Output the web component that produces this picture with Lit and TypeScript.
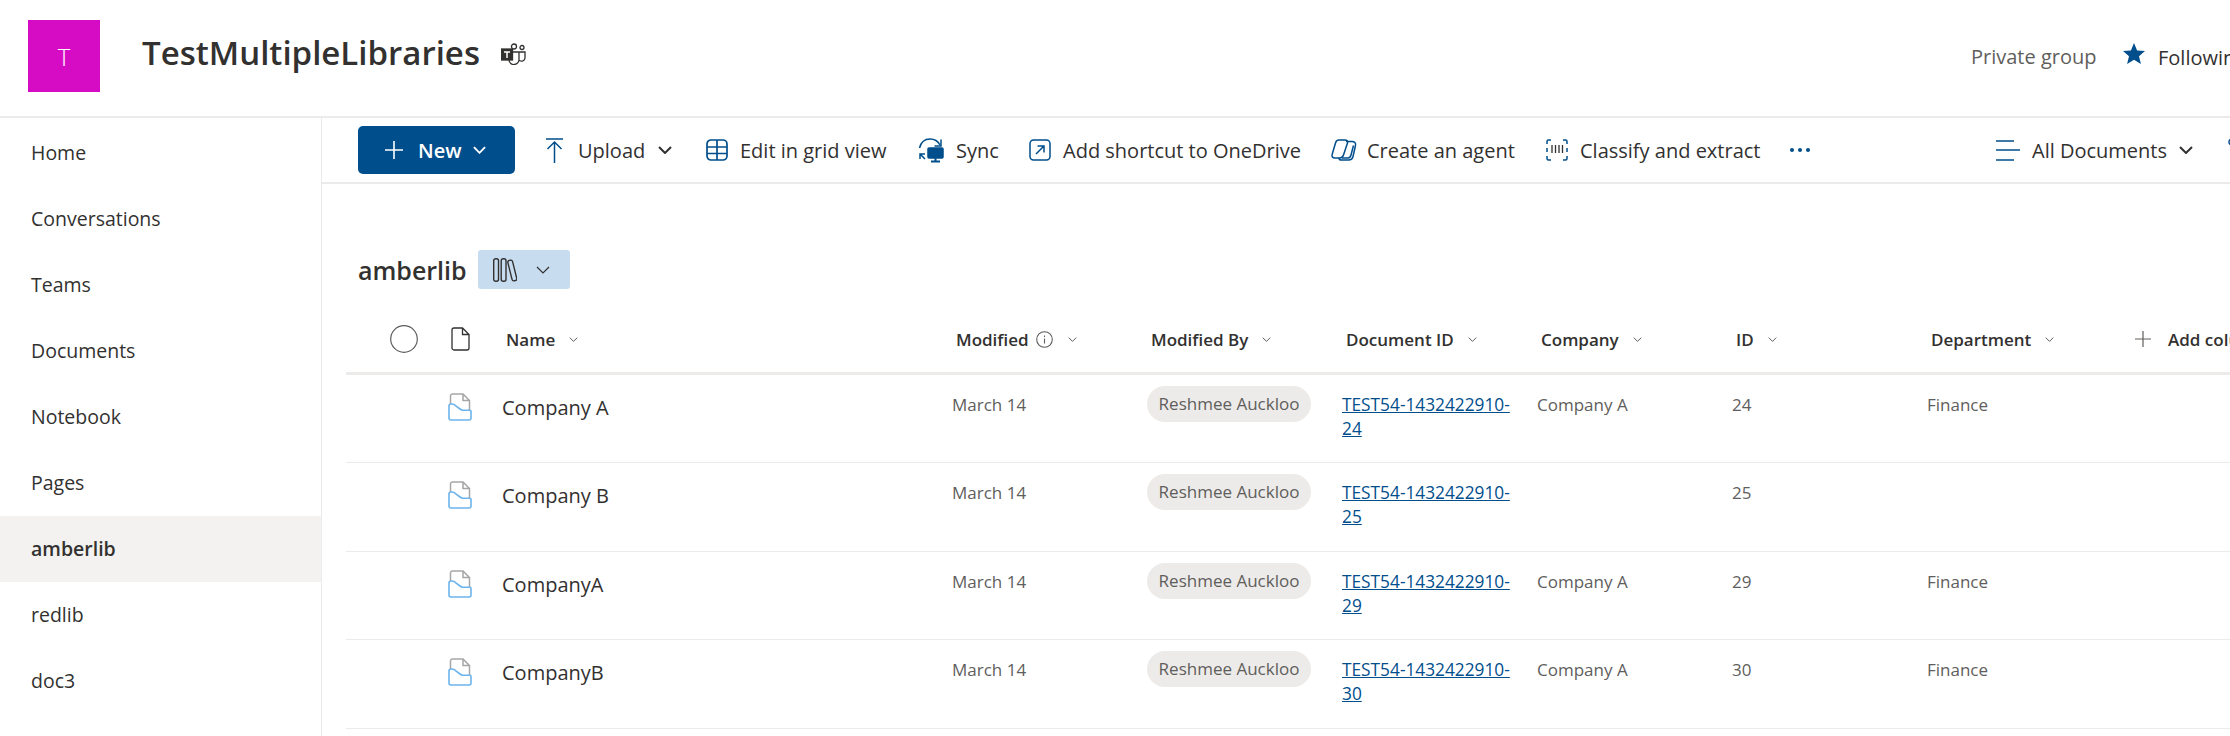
import { LitElement, html, css } from "lit";
import { customElement } from "lit/decorators.js";

const BLUE = "#004e8c";
const chev = (w: number, h: number, sw: number, color = "#323130") => html`<svg class="chev" width=${w} height=${h} viewBox="0 0 14 8" fill="none" stroke=${color} stroke-width=${sw}><path d="M1 1l6 6 6-6" /></svg>`;
const smallChev = () => chev(9, 5, 1.4, "#484644");

const icons = {
  plus: html`<svg width="18" height="18" viewBox="0 0 18 18" stroke="#fff" stroke-width="1.6"><path d="M9 0v18M0 9h18"/></svg>`,
  upload: html`<svg width="20" height="25" viewBox="0 0 20 25" fill="none" stroke=${BLUE} stroke-width="1.5"><path d="M1 1h17M9.500 25V4M2.500 11l7-7 7 7"/></svg>`,
  grid: html`<svg width="22" height="22" viewBox="0 0 22 22" fill="none" stroke=${BLUE} stroke-width="1.7"><rect x="1" y="1" width="20" height="20" rx="4"/><path d="M1 8h20M1 14.500h20M11 1v20"/></svg>`,
  sync: html`<svg width="26" height="26" viewBox="0 0 26 26" fill="none" stroke=${BLUE} stroke-width="1.5"><path d="M1.500 11C3 5 7 2 12 2c4 0 8 2 10 6"/><path d="M23 2.500V9h-6.500"/><path d="M2 17l5 5M2 22v-5h5"/><rect x="10" y="11" width="15" height="10" rx="1" fill=${BLUE}/><path d="M17.500 21v3M13 24.500h9" stroke-width="2"/></svg>`,
  shortcut: html`<svg width="22" height="22" viewBox="0 0 22 22" fill="none" stroke=${BLUE} stroke-width="1.5"><rect x="1" y="1" width="20" height="20" rx="3.500"/><path d="M7 15l8-8M8.500 7H15v6.500"/></svg>`,
  copilot: html`<svg width="26" height="24" viewBox="0 0 26 24" fill="none" stroke=${BLUE} stroke-width="1.5"><path d="M8 2h6c2 0 3 1 2.500 3L12.500 17c-.6 2-2 3-4 3H4c-2.500 0-3.500-1.500-2.800-3.700L4.500 5C5 3 6 2 8 2z"/><path d="M15 3.500h6c2.500 0 4 1.500 3.500 4L22 18.500C21.500 21 20 22 17.500 22h-7c-2 0-2.800-1-2.300-2"/><path d="M11 20h6c1.500 0 2.500-1 3-3l2.500-9.500"/></svg>`,
  classify: html`<svg width="22" height="22" viewBox="0 0 22 22" fill="none" stroke=${BLUE} stroke-width="1.500"><path d="M5 1H2.500Q1 1 1 2.500V5M17 1h2.500Q21 1 21 2.500V5M5 21H2.500Q1 21 1 19.500V17M17 21h2.500q1.500 0 1.500-1.500V17M1 9v4M21 9v4"/><path d="M6 6v8M9.500 6v8M13 6v8M16.500 6v8" stroke="#323130" stroke-width="1.300"/></svg>`,
  dots: html`<svg width="20" height="4" viewBox="0 0 20 4" fill=${BLUE}><circle cx="2" cy="2" r="2"/><circle cx="10" cy="2" r="2"/><circle cx="18" cy="2" r="2"/></svg>`,
  view: html`<svg width="24" height="21" viewBox="0 0 24 21" fill="none" stroke=${BLUE} stroke-width="1.700"><path d="M0 1h18M0 10h24M0 20h18"/></svg>`,
  star: html`<svg class="star" width="22" height="22" viewBox="0 0 22 22" fill=${BLUE}><path d="M11 0l3.100 7.400 7.900.6-6 5.200 1.900 7.800L11 16.800 4.100 21l1.900-7.800L0 8l7.900-.6z"/></svg>`,
  teams: html`<svg width="25" height="22" viewBox="0 0 25 22" fill="none" stroke="#323130" stroke-width="1.300"><circle cx="13" cy="3.500" r="2.500"/><circle cx="21" cy="4.500" r="2"/><path d="M8 9h10v7a5 5 0 0 1-10 1M18.500 9H24v5.500a3.500 3.500 0 0 1-5.500 3"/><rect x=".5" y="6" width="11" height="11" fill="#323130"/><path d="M3 9h6M6 9v6" stroke="#fff" stroke-width="1.500"/></svg>`,
  books: html`<svg width="24" height="24" viewBox="0 0 24 24" fill="none" stroke="#323130" stroke-width="1.400"><rect x=".7" y=".7" width="4.800" height="22.600" rx="2"/><rect x="8.200" y=".7" width="4.800" height="22.600" rx="2"/><rect x="-2.400" y="-10.500" width="4.800" height="21" rx="2" transform="translate(19.300 12.500) rotate(-14)"/></svg>`,
  circle: html`<svg width="28" height="28" viewBox="0 0 28 28" fill="none" stroke="#605e5c" stroke-width="1.200"><circle cx="14" cy="14" r="13.300"/></svg>`,
  doc: html`<svg width="19" height="24" viewBox="0 0 19 24" fill="none" stroke="#323130" stroke-width="1.300"><path d="M3 1h8.500L18 7.500V21a2 2 0 0 1-2 2H3a2 2 0 0 1-2-2V3a2 2 0 0 1 2-2zM11.500 1v6.500H18"/></svg>`,
  folderDoc: html`<svg width="24" height="28" viewBox="0 0 24 28" fill="none"><path d="M2.500 12V3a2 2 0 0 1 2-2H15l6.500 6.500V17M15 1v6.500h6.500" stroke="#a6a6a6" stroke-width="1.500"/><path d="M1 13a2 2 0 0 1 2-2h1c2 0 3 1 4.500 2.300L12 16c1 .8 2 1.200 3 1.200h7a1 1 0 0 1 1 1V25a2 2 0 0 1-2 2H3a2 2 0 0 1-2-2z" fill="#fff" stroke="#6cb4ee" stroke-width="1.600"/></svg>`,
  info: html`<svg class="info" width="17" height="17" viewBox="0 0 17 17" fill="none" stroke="#605e5c" stroke-width="1.100"><circle cx="8.500" cy="8.500" r="7.800"/><path d="M8.500 7.500v5M8.500 4.500v1.400"/></svg>`,
  addPlus: html`<svg width="16" height="16" viewBox="0 0 16 16" stroke="#605e5c" stroke-width="1.200"><path d="M8 0v16M0 8h16"/></svg>`,
  filter: html`<svg width="20" height="24" viewBox="0 0 20 24" fill="none" stroke=${BLUE} stroke-width="1.500"><circle cx="5" cy="4" r="3"/><path d="M8 4h12"/></svg>`,
};

const NAV = ["Home", "Conversations", "Teams", "Documents", "Notebook", "Pages", "amberlib", "redlib", "doc3"];
const COLS = ["Modified By", "Document ID", "Company", "ID", "Department"];
const ROWS = [
  { name: "Company A", co: "Company A", id: "24", dept: "Finance" },
  { name: "Company B", co: "", id: "25", dept: "" },
  { name: "CompanyA", co: "Company A", id: "29", dept: "Finance" },
  { name: "CompanyB", co: "Company A", id: "30", dept: "Finance" },
];

@customElement("app-root")
export class AppRoot extends LitElement {
  static styles = css`
    :host {
      display: block;
      width: 2230px;
      height: 736px;
      overflow: hidden;
      background: #fff;
      font-family: "Open Sans", "Noto Sans", sans-serif;
      color: #323130;
      font-size: 20px;
    }
    svg { display: block; flex: none; }
    .top {
      height: 118px;
      box-sizing: border-box;
      border-bottom: 2px solid #edebe9;
      display: flex;
      width: 2400px;
      padding: 20px 0 0 28px;
    }
    .logo {
      width: 72px;
      height: 72px;
      background: #d60cc4;
      color: #fff;
      font-size: 24px;
      font-weight: 300;
      display: flex;
      align-items: center;
      justify-content: center;
      flex: none;
    }
    .title {
      margin: 8px 0 0 42px;
      font-size: 33px;
      font-weight: 600;
      line-height: 50px;
      width: 359px;
      white-space: nowrap;
    }
    .teams { margin-top: 23px; }
    .private {
      margin: 24px 0 0 1445px;
      color: #605e5c;
      width: 152px;
      line-height: 26px;
      white-space: nowrap;
    }
    .follow { display: flex; align-items: center; gap: 13px; margin-top: 24px; height: 26px; white-space: nowrap; }
    .star { margin-bottom: 6px; }
    .body { display: flex; }
    .nav {
      width: 322px;
      box-sizing: border-box;
      flex: none;
      border-right: 1px solid #edebe9;
      height: 618px;
      padding-top: 2px;
      font-size: 19.5px;
    }
    .nav-item {
      height: 66px;
      line-height: 66px;
      padding-left: 31px;
    }
    .nav-item.sel { background: #f3f2f1; font-weight: 600; }
    .main { flex: 1; min-width: 0; }
    .bar {
      height: 66px;
      box-sizing: border-box;
      border-bottom: 2px solid #edebe9;
      display: flex;
      align-items: center;
      padding-left: 36px;
      white-space: nowrap;
      width: 1920px;
    }
    .new {
      width: 157px;
      height: 48px;
      background: #004e8c;
      color: #fff;
      border-radius: 5px;
      font-weight: 600;
      display: flex;
      align-items: center;
      box-sizing: border-box;
      padding-left: 27px;
      margin-right: 30px;
      flex: none;
    }
    .new-label { margin: 0 11px 0 15px; }
    .cmd { display: flex; align-items: center; gap: 12px; flex: none; }
    .s-upload { width: 161px; gap: 13px; }
    .s-grid { width: 212px; }
    .s-sync { width: 111px; }
    .s-short { width: 302px; }
    .s-copilot { width: 215px; gap: 10px; }
    .s-classify { width: 244px; }
    .s-dots { width: 206px; }
    .s-view { width: 231px; }
    .lib {
      display: flex;
      align-items: center;
      height: 39px;
      margin: 66px 0 0 36px;
      gap: 12px;
    }
    .lib-name { font-size: 25px; font-weight: 600; width: 108px; }
    .switch {
      width: 92px;
      height: 39px;
      background: #c7dcef;
      border-radius: 3px;
      display: flex;
      align-items: center;
      box-sizing: border-box;
      padding-left: 15px;
      gap: 19px;
    }
    .table { margin-left: 24px; width: 1930px; }
    .grid {
      display: grid;
      grid-template-columns: 96px 56px 450px 195px 195px 195px 195px 195px 212px 1fr;
    }
    .head {
      height: 86px;
      box-sizing: border-box;
      border-bottom: 3px solid #edebe9;
      font-size: 17px;
      font-weight: 600;
      align-items: center;
      padding-top: 17px;
      white-space: nowrap;
    }
    .hc { display: flex; align-items: center; gap: 14px; padding-left: 8px; }
    .hc.mod { gap: 7px; }
    .info { margin-right: 8px; }
    .sel-c { padding-left: 44px; }
    .doc-c { padding-left: 9px; }
    .hc.add { padding-left: 0; gap: 17px; }
    .row {
      height: 88.4px;
      box-sizing: border-box;
      border-bottom: 1px solid #edebe9;
      font-size: 17px;
      color: #605e5c;
      line-height: 24px;
      padding-top: 18px;
    }
    .cell { padding-left: 4px; }
    .file { padding-left: 6px; }
    .name { font-size: 20px; color: #323130; padding: 2px 0 0 4px; line-height: 26px; }
    .pill {
      display: block;
      background: #edebe9;
      border-radius: 18px;
      height: 36px;
      line-height: 35px;
      margin-top: -7px;
      width: 164px;
      white-space: nowrap;
      text-align: center;
    }
    .link {
      color: #004e8c;
      text-decoration: underline;
      font-size: 17.3px;
      padding: 0 19px 0 4px;
    }
  `;

  render() {
    return html`
      <div class="top">
        <div class="logo">T</div>
        <div class="title">TestMultipleLibraries</div>
        <div class="teams">${icons.teams}</div>
        <div class="private">Private group</div>
        <div class="follow">${icons.star}<span>Following</span></div>
      </div>
      <div class="body">
        <nav class="nav">
          ${NAV.map((n) => html`<div class="nav-item ${n === "amberlib" ? "sel" : ""}">${n}</div>`)}
        </nav>
        <div class="main">
          <div class="bar">
            <div class="new">${icons.plus}<span class="new-label">New</span>${chev(13, 8, 2, "#fff")}</div>
            <div class="cmd s-upload">${icons.upload}<span>Upload</span>${chev(14, 8, 2)}</div>
            <div class="cmd s-grid">${icons.grid}<span>Edit in grid view</span></div>
            <div class="cmd s-sync">${icons.sync}<span>Sync</span></div>
            <div class="cmd s-short">${icons.shortcut}<span>Add shortcut to OneDrive</span></div>
            <div class="cmd s-copilot">${icons.copilot}<span>Create an agent</span></div>
            <div class="cmd s-classify">${icons.classify}<span>Classify and extract</span></div>
            <div class="cmd s-dots">${icons.dots}</div>
            <div class="cmd s-view">${icons.view}<span>All Documents</span>${chev(14, 8, 2)}</div>
            <div class="cmd">${icons.filter}</div>
          </div>
          <div class="lib">
            <span class="lib-name">amberlib</span>
            <div class="switch">${icons.books}${chev(14, 8, 1.2)}</div>
          </div>
          <div class="table">
            <div class="grid head">
              <div class="sel-c">${icons.circle}</div>
              <div class="doc-c">${icons.doc}</div>
              <div class="hc">Name ${smallChev()}</div>
              <div class="hc mod">Modified ${icons.info}${smallChev()}</div>
              ${COLS.map((c) => html`<div class="hc">${c} ${smallChev()}</div>`)}
              <div class="hc add">${icons.addPlus}<span>Add column</span></div>
            </div>
            ${ROWS.map(
              (r) => html`
                <div class="grid row">
                  <div></div>
                  <div class="file">${icons.folderDoc}</div>
                  <div class="name">${r.name}</div>
                  <div class="cell">March 14</div>
                  <div class="cell"><span class="pill">Reshmee Auckloo</span></div>
                  <div class="link">TEST54-1432422910-${r.id}</div>
                  <div class="cell">${r.co}</div>
                  <div class="cell">${r.id}</div>
                  <div class="cell">${r.dept}</div>
                  <div></div>
                </div>
              `
            )}
          </div>
        </div>
      </div>
    `;
  }
}
